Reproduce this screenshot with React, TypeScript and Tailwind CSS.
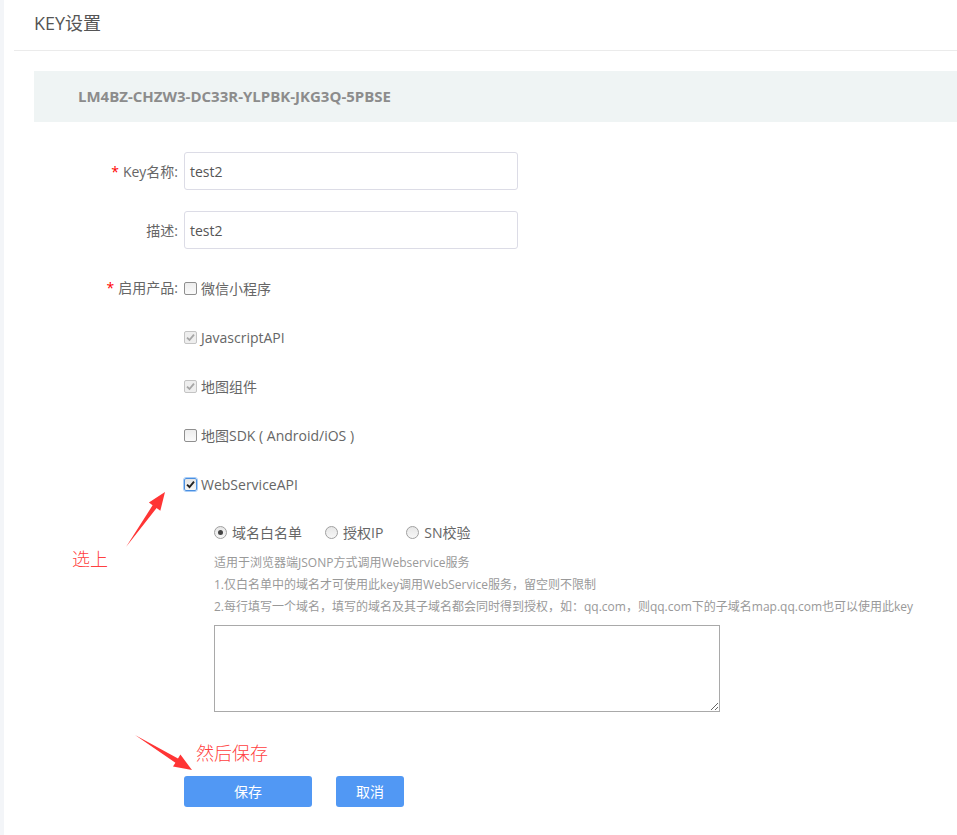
import React from "react";

const font = { fontFamily: '"Open Sans", "Noto Sans CJK SC", sans-serif' };

const Check = ({ state }: { state: "off" | "disabled" | "on" }) => {
  if (state === "off") {
    return (
      <span className="inline-block w-[13px] h-[13px] rounded-[2px] border border-[#8f8f8f] bg-gradient-to-b from-[#ededed] to-[#fafafa]" />
    );
  }
  if (state === "disabled") {
    return (
      <span className="inline-flex items-center justify-center w-[13px] h-[13px] rounded-[2px] border border-[#c4c4c4] bg-[#eeeeee]">
        <svg width="9" height="9" viewBox="0 0 9 9">
          <path d="M1 4.6 L3.5 7 L8 1.6" stroke="#a6a6a6" strokeWidth="1.8" fill="none" />
        </svg>
      </span>
    );
  }
  return (
    <span className="inline-flex items-center justify-center w-[13px] h-[13px] rounded-[2px] border border-[#4a90e2] bg-gradient-to-b from-[#e4e4e4] to-[#f6f6f6] outline outline-1 outline-[#a9cdf7]">
      <svg width="9" height="9" viewBox="0 0 9 9">
        <path d="M1 4.6 L3.5 7 L8 1.6" stroke="#222" strokeWidth="1.9" fill="none" />
      </svg>
    </span>
  );
};

const Radio = ({ on }: { on?: boolean }) => (
  <span className="inline-flex items-center justify-center w-[13px] h-[13px] rounded-full border border-[#a0a0a0] bg-gradient-to-b from-[#e6e6e6] to-[#f7f7f7]">
    {on && <span className="w-[5px] h-[5px] rounded-full bg-[#444]" />}
  </span>
);

const products: { label: string; state: "off" | "disabled" | "on" }[] = [
  { label: "微信小程序", state: "off" },
  { label: "JavascriptAPI", state: "disabled" },
  { label: "地图组件", state: "disabled" },
  { label: "地图SDK ( Android/iOS )", state: "off" },
  { label: "WebServiceAPI", state: "on" },
];

export default function App() {
  return (
    <div className="relative flex w-[957px] min-h-[835px] bg-[#f3f5f8] text-[14px]" style={font}>
      <div className="w-[4px] shrink-0" />
      <div className="flex-1 bg-white pb-[28px]">
        {/* header */}
        <div className="ml-[10px] h-[51px] border-b border-[#ebebeb] flex items-center pl-[20px] pb-[4px]">
          <h1 className="text-[18px] text-[#555]">KEY设置</h1>
        </div>

        {/* key box */}
        <div className="mt-[20px] ml-[30px] h-[51px] bg-[#eff4f4] flex items-center pl-[44px]">
          <span className="text-[15px] font-bold text-[#8c8c8c]">
            LM4BZ-CHZW3-DC33R-YLPBK-JKG3Q-5PBSE
          </span>
        </div>

        {/* form */}
        <div className="mt-[30px] flex flex-col">
          <div className="flex items-center h-[38px]">
            <label className="w-[180px] pr-[6px] text-right text-[#666]">
              <span className="text-[#f00] mr-[4px]">*</span>Key名称:
            </label>
            <div className="w-[334px] h-[38px] border border-[#dcdce6] rounded-[3px] flex items-center px-[5px] text-[#555]">
              test2
            </div>
          </div>
          <div className="flex items-center h-[38px] mt-[21px]">
            <label className="w-[180px] pr-[6px] text-right text-[#666]">描述:</label>
            <div className="w-[334px] h-[38px] border border-[#dcdce6] rounded-[3px] flex items-center px-[5px] text-[#555]">
              test2
            </div>
          </div>

          <div className="flex mt-[27px]">
            <label className="w-[180px] pr-[6px] text-right text-[#666] h-[24px] leading-[24px]">
              <span className="text-[#f00] mr-[4px]">*</span>启用产品:
            </label>
            <div className="flex flex-col gap-[25px]">
              {products.map((p) => (
                <div key={p.label} className="flex items-center h-[24px] gap-[4px] text-[#666]">
                  <Check state={p.state} />
                  <span>{p.label}</span>
                </div>
              ))}
            </div>
          </div>

          <div className="ml-[210px] mt-[24px] flex flex-col">
            <div className="flex items-center h-[24px] text-[#666]">
              <span className="flex items-center gap-[5px]">
                <Radio on />
                域名白名单
              </span>
              <span className="flex items-center gap-[5px] ml-[23px]">
                <Radio />
                授权IP
              </span>
              <span className="flex items-center gap-[5px] ml-[23px]">
                <Radio />
                SN校验
              </span>
            </div>
            <div className="mt-[8px] text-[12px] leading-[22px] text-[#999]">
              <p>适用于浏览器端JSONP方式调用Webservice服务</p>
              <p>1.仅白名单中的域名才可使用此key调用WebService服务，留空则不限制</p>
              <p>2.每行填写一个域名，填写的域名及其子域名都会同时得到授权，如：qq.com，则qq.com下的子域名map.qq.com也可以使用此key</p>
            </div>
            <textarea
              className="mt-[7px] w-[506px] h-[87px] border border-[#a9a9a9] outline-none"
              defaultValue=""
            />
          </div>

          <div className="ml-[180px] mt-[64px] flex gap-[24px]">
            <button className="w-[128px] h-[31px] rounded-[3px] bg-[#5198f4] text-white text-[14px]">保存</button>
            <button className="w-[68px] h-[31px] rounded-[3px] bg-[#5198f4] text-white text-[14px]">取消</button>
          </div>
        </div>
      </div>

      {/* annotations */}
      <span
        className="absolute left-[72px] top-[545px] text-[18px] font-light text-[#ff4040]"
        style={{ fontFamily: '"Noto Sans CJK SC", serif' }}
      >
        选上
      </span>
      <span
        className="absolute left-[196px] top-[739px] text-[18px] font-light text-[#ff4040]"
        style={{ fontFamily: '"Noto Sans CJK SC", serif' }}
      >
        然后保存
      </span>
      <svg className="absolute left-0 top-0 pointer-events-none" width="957" height="835">
        <polygon points="126,547 152.6,505.3 148.9,502.6 165,492 160.3,510.8 156.6,508.1" fill="#ff3535" />
        <polygon points="135,735 178,758.4 180.4,754.6 192,770 173,766.6 175.4,762.7" fill="#ff3535" />
      </svg>
    </div>
  );
}
